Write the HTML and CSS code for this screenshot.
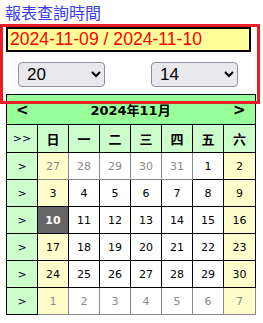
FILE: index.html
```html
<!DOCTYPE html>
<html>
  <head>
    <title>報表查詢時間</title>
    <link rel="stylesheet" href="styles.css">
  </head>
  <body>
    <div class="title">報表查詢時間</div>

    <div class="panel">
      <div class="range">2024-11-09 / 2024-11-10</div>

      <div class="pickers">
        <select class="pick">
          <option>20</option>
        </select>
        <select class="pick">
          <option>14</option>
        </select>
      </div>
    </div>

    <table class="cal">
      <colgroup>
        <col class="c1"><col><col><col><col><col><col><col class="c8">
      </colgroup>
      <tr class="head">
        <td class="nav">&lt;</td>
        <td class="month" colspan="6">2024年11月</td>
        <td class="nav">&gt;</td>
      </tr>
      <tr class="week">
        <td class="wk">&gt;&gt;</td>
        <td>日</td><td>一</td><td>二</td><td>三</td><td>四</td><td>五</td><td>六</td>
      </tr>
      <tr>
        <td class="wk">&gt;</td>
        <td class="end other">27</td><td class="other">28</td><td class="other">29</td><td class="other">30</td><td class="other">31</td><td>1</td><td class="end">2</td>
      </tr>
      <tr>
        <td class="wk">&gt;</td>
        <td class="end">3</td><td>4</td><td>5</td><td>6</td><td>7</td><td>8</td><td class="end">9</td>
      </tr>
      <tr>
        <td class="wk">&gt;</td>
        <td class="today">10</td><td>11</td><td>12</td><td>13</td><td>14</td><td>15</td><td class="end">16</td>
      </tr>
      <tr>
        <td class="wk">&gt;</td>
        <td class="end">17</td><td>18</td><td>19</td><td>20</td><td>21</td><td>22</td><td class="end">23</td>
      </tr>
      <tr>
        <td class="wk">&gt;</td>
        <td class="end">24</td><td>25</td><td>26</td><td>27</td><td>28</td><td>29</td><td class="end">30</td>
      </tr>
      <tr>
        <td class="wk">&gt;</td>
        <td class="end other">1</td><td class="other">2</td><td class="other">3</td><td class="other">4</td><td class="other">5</td><td class="other">6</td><td class="end other">7</td>
      </tr>
    </table>
  </body>
</html>
```

FILE: styles.css
```css
body {
  margin: 0;
  font-family: "Liberation Sans", "Noto Sans CJK TC", sans-serif;
  background-color: #ffffff;
}

.title {
  height: 25px;
  line-height: 28px;
  padding-left: 5px;
  font-size: 16px;
  color: #3a3af5;
}

.panel {
  margin: 0 0 0 3px;
  width: 254px;
  height: 74px;
  outline: 3px solid #e91d25;
}

.range {
  box-sizing: border-box;
  margin: 2px 0 0 3px;
  width: 245px;
  height: 25px;
  line-height: 21px;
  padding-left: 2px;
  border: 2px solid #000000;
  background-color: #ffff99;
  color: #ff0000;
  font-size: 17.6px;
}

.pickers {
  display: flex;
  gap: 46px;
  margin-top: 10px;
  padding-left: 15px;
}

.pick {
  box-sizing: border-box;
  width: 87px;
  height: 25px;
  padding-left: 4px;
  border: 1px solid #8f8f9d;
  border-radius: 4px;
  background-color: #e9e9ed;
  color: #000000;
  font-family: "Liberation Sans", sans-serif;
  font-size: 17px;
}

/* calendar slides up under the red frame */
.cal {
  margin: -7px 0 0 6px;
  width: 250px;
  border-collapse: collapse;
  border: 1px solid #000000;
  table-layout: fixed;
  font-family: "DejaVu Sans", "Noto Sans CJK TC", sans-serif;
  font-size: 11px;
}

.cal col {
  width: 31px;
}

.cal col.c8 {
  width: 32px;
}

.cal td {
  height: 26px;
  padding: 0;
  text-align: center;
  border: 1px solid #000000;
  background-color: #ffffff;
  color: #000000;
}

.cal .head td {
  height: 29px;
  border: none;
  background-color: #99ff99;
  font-weight: bold;
  font-size: 13px;
}

.cal .head .nav {
  font-size: 15px;
}

.cal .week td {
  height: 27px;
  background-color: #ccffcc;
  font-weight: bold;
  font-size: 13px;
}

.cal td.wk,
.cal .week td.wk {
  background-color: #ccffcc;
  color: #000033;
  font-weight: normal;
  font-size: 11px;
}

.cal td.end {
  background-color: #ffffcc;
}

.cal td.other {
  color: #888888;
  border-color: #888888;
}

.cal td.today {
  background-color: #666666;
  color: #ffffff;
  font-weight: bold;
}
```
